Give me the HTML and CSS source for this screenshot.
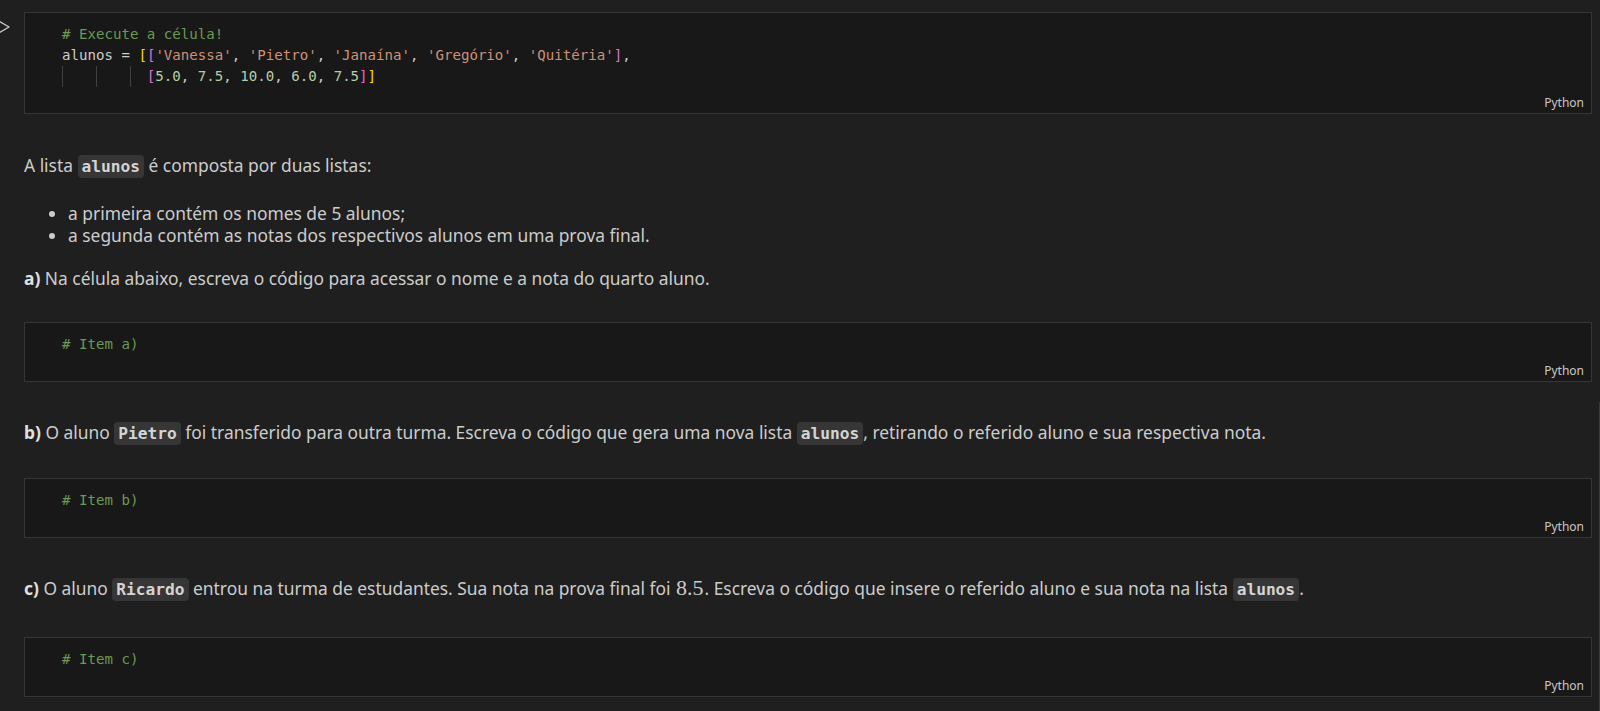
FILE: index.html
```html
<!DOCTYPE html>
<html lang="pt">
<head>
<meta charset="utf-8">
<title>Notebook</title>
<link rel="stylesheet" href="styles.css">
</head>
<body>
<div class="notebook">
  <svg class="run-btn" width="14" height="16" viewBox="0 0 14 16"><polygon points="1,1.5 12,8 1,14.5" fill="none" stroke="#cccccc" stroke-width="1.3" stroke-linejoin="round"/></svg>

  <div class="code-cell">
    <div class="editor">
      <div class="ln"><span class="c"># Execute a célula!</span></div>
      <div class="ln">alunos = <span class="b1">[</span><span class="b2">[</span><span class="s">'Vanessa'</span>, <span class="s">'Pietro'</span>, <span class="s">'Janaína'</span>, <span class="s">'Gregório'</span>, <span class="s">'Quitéria'</span><span class="b2">]</span>,</div>
      <div class="ln"><span class="ig w4"></span><span class="ig w4"></span><span class="ig w2"></span><span class="b2">[</span><span class="n">5.0</span>, <span class="n">7.5</span>, <span class="n">10.0</span>, <span class="n">6.0</span>, <span class="n">7.5</span><span class="b2">]</span><span class="b1">]</span></div>
    </div>
    <div class="footer">Python</div>
  </div>

  <div class="md first">
    <p>A lista <code>alunos</code> é composta por duas listas:</p>
    <ul>
      <li>a primeira contém os nomes de 5 alunos;</li>
      <li>a segunda contém as notas dos respectivos alunos em uma prova final.</li>
    </ul>
    <p><strong>a)</strong> Na célula abaixo, escreva o código para acessar o nome e a nota do quarto aluno.</p>
  </div>

  <div class="code-cell">
    <div class="editor">
      <div class="ln"><span class="c"># Item a)</span></div>
    </div>
    <div class="footer">Python</div>
  </div>

  <div class="md">
    <p><strong>b)</strong> O aluno <code>Pietro</code> foi transferido para outra turma. Escreva o código que gera uma nova lista <code>alunos</code>, retirando o referido aluno e sua respectiva nota.</p>
  </div>

  <div class="code-cell">
    <div class="editor">
      <div class="ln"><span class="c"># Item b)</span></div>
    </div>
    <div class="footer">Python</div>
  </div>

  <div class="md tall">
    <p><strong>c)</strong> O aluno <code>Ricardo</code> entrou na turma de estudantes. Sua nota na prova final foi <span class="math">8.5</span>. Escreva o código que insere o referido aluno e sua nota na lista <code>alunos</code>.</p>
  </div>

  <div class="code-cell">
    <div class="editor">
      <div class="ln"><span class="c"># Item c)</span></div>
    </div>
    <div class="footer">Python</div>
  </div>

  <div class="scroll-edge"></div>
</div>
</body>
</html>
```

FILE: styles.css
```css
html, body {
  margin: 0;
  padding: 0;
  background: #1f1f1f;
  height: 100%;
  overflow: hidden;
}

.notebook {
  position: relative;
  padding: 12px 8px 0 24px;
  font-family: "Noto Sans", "Open Sans", sans-serif;
  color: #cccccc;
  min-height: 100%;
  box-sizing: border-box;
}

.run-btn {
  position: absolute;
  left: -3px;
  top: 19px;
}

.code-cell {
  background: #181818;
  border: 1px solid #363636;
}

.editor {
  padding: 11px 0 4px 37px;
  font-family: "DejaVu Sans Mono", "Liberation Mono", monospace;
  font-size: 14.1px;
  line-height: 21px;
  color: #cccccc;
}

.ln {
  height: 21px;
  white-space: pre;
}

.c { color: #6a9955; }
.s { color: #ce9178; }
.n { color: #b5cea8; }
.b1 { color: #ffd700; }
.b2 { color: #da70d6; }

.ig {
  display: inline-block;
  height: 21px;
  vertical-align: top;
  box-shadow: inset 1px 0 0 #404040;
}
.w4 { width: 4ch; }
.w2 { width: 2ch; }

.footer {
  height: 19px;
  padding: 3px 7px 0 0;
  line-height: 18px;
  text-align: right;
  font-family: "Noto Sans", "Open Sans", sans-serif;
  font-size: 12px;
  color: #c8c8c8;
}

.md {
  padding: 39px 0 33px 0;
  font-size: 17.4px;
  line-height: 22px;
}

.md.first {
  padding-top: 40px;
}

.md.tall {
  padding-bottom: 36px;
}

.md p {
  margin: 0;
}

.md ul {
  margin: 24px 0 21px 0;
  padding-left: 44px;
}

.md li {
  line-height: 22px;
}

.md strong {
  font-weight: 700;
  color: #e0e0e0;
}

.md code {
  font-family: "DejaVu Sans Mono", "Liberation Mono", monospace;
  font-weight: 700;
  font-size: 16.2px;
  background: #363636;
  border-radius: 4px;
  padding: 2px 4px;
  color: #d4d4d4;
}

.math {
  font-family: "Liberation Serif", serif;
  font-size: 22px;
  margin: 0 1px;
}

.scroll-edge {
  position: absolute;
  right: 0;
  top: 402px;
  width: 1px;
  height: 320px;
  background: #3a3a3a;
}
```
